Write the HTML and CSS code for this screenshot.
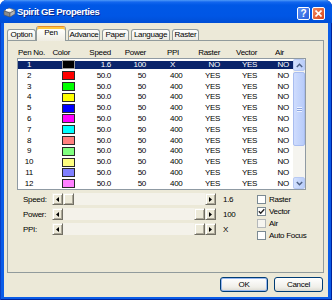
FILE: index.html
```html
<!DOCTYPE html>
<html lang="en">
<head>
    <meta charset="UTF-8">
    <title>Spirit GE Properties</title>
    <link rel="stylesheet" href="styles.css">
</head>
<body>

<div class="window">
    <div class="titlebar">
        <svg class="app-icon" width="13" height="12" viewBox="0 0 13 12">
            <polygon points="1,5 6,2 12,4 7,7" fill="#e2e2e2" stroke="#6a6a6a" stroke-width="0.6"/>
            <polygon points="1,5 7,7 7,11 1,9" fill="#8c8c8c" stroke="#555" stroke-width="0.6"/>
            <polygon points="7,7 12,4 12,8 7,11" fill="#b4b4b4" stroke="#555" stroke-width="0.6"/>
            <rect x="3" y="3" width="5" height="2" fill="#fff"/>
        </svg>
        <span class="title">Spirit GE Properties</span>
        <div class="caption-btns">
            <span class="cap-btn help">?</span>
            <span class="cap-btn close">
                <svg width="7" height="7" viewBox="0 0 7 7"><path d="M0.5 0.5L6.5 6.5M6.5 0.5L0.5 6.5" stroke="#fff" stroke-width="1.6"/></svg>
            </span>
        </div>
    </div>

    <div class="client">
        <div class="tabs">
            <div class="tab tab-option">Option</div>
            <div class="tab tab-pen active">Pen</div>
            <div class="tab tab-advance">Advance</div>
            <div class="tab tab-paper">Paper</div>
            <div class="tab tab-language">Language</div>
            <div class="tab tab-raster">Raster</div>
        </div>

        <div class="panel">
            <div class="cols head">
                <span class="c-no">Pen No.</span>
                <span class="c-color">Color</span>
                <span class="c-speed">Speed</span>
                <span class="c-power">Power</span>
                <span class="c-ppi">PPI</span>
                <span class="c-raster">Raster</span>
                <span class="c-vector">Vector</span>
                <span class="c-air">Air</span>
            </div>

            <div class="listbox">
                <div class="rows">
                    <div class="cols row selected">
                        <span class="c-no">1</span><span class="c-color"><i class="swatch pen1"></i></span>
                        <span class="c-speed">1.6</span><span class="c-power">100</span><span class="c-ppi">X</span>
                        <span class="c-raster">NO</span><span class="c-vector">YES</span><span class="c-air">NO</span>
                    </div>
                    <div class="cols row">
                        <span class="c-no">2</span><span class="c-color"><i class="swatch pen2"></i></span>
                        <span class="c-speed">50.0</span><span class="c-power">50</span><span class="c-ppi">400</span>
                        <span class="c-raster">YES</span><span class="c-vector">YES</span><span class="c-air">NO</span>
                    </div>
                    <div class="cols row">
                        <span class="c-no">3</span><span class="c-color"><i class="swatch pen3"></i></span>
                        <span class="c-speed">50.0</span><span class="c-power">50</span><span class="c-ppi">400</span>
                        <span class="c-raster">YES</span><span class="c-vector">YES</span><span class="c-air">NO</span>
                    </div>
                    <div class="cols row">
                        <span class="c-no">4</span><span class="c-color"><i class="swatch pen4"></i></span>
                        <span class="c-speed">50.0</span><span class="c-power">50</span><span class="c-ppi">400</span>
                        <span class="c-raster">YES</span><span class="c-vector">YES</span><span class="c-air">NO</span>
                    </div>
                    <div class="cols row">
                        <span class="c-no">5</span><span class="c-color"><i class="swatch pen5"></i></span>
                        <span class="c-speed">50.0</span><span class="c-power">50</span><span class="c-ppi">400</span>
                        <span class="c-raster">YES</span><span class="c-vector">YES</span><span class="c-air">NO</span>
                    </div>
                    <div class="cols row">
                        <span class="c-no">6</span><span class="c-color"><i class="swatch pen6"></i></span>
                        <span class="c-speed">50.0</span><span class="c-power">50</span><span class="c-ppi">400</span>
                        <span class="c-raster">YES</span><span class="c-vector">YES</span><span class="c-air">NO</span>
                    </div>
                    <div class="cols row">
                        <span class="c-no">7</span><span class="c-color"><i class="swatch pen7"></i></span>
                        <span class="c-speed">50.0</span><span class="c-power">50</span><span class="c-ppi">400</span>
                        <span class="c-raster">YES</span><span class="c-vector">YES</span><span class="c-air">NO</span>
                    </div>
                    <div class="cols row">
                        <span class="c-no">8</span><span class="c-color"><i class="swatch pen8"></i></span>
                        <span class="c-speed">50.0</span><span class="c-power">50</span><span class="c-ppi">400</span>
                        <span class="c-raster">YES</span><span class="c-vector">YES</span><span class="c-air">NO</span>
                    </div>
                    <div class="cols row">
                        <span class="c-no">9</span><span class="c-color"><i class="swatch pen9"></i></span>
                        <span class="c-speed">50.0</span><span class="c-power">50</span><span class="c-ppi">400</span>
                        <span class="c-raster">YES</span><span class="c-vector">YES</span><span class="c-air">NO</span>
                    </div>
                    <div class="cols row">
                        <span class="c-no">10</span><span class="c-color"><i class="swatch pen10"></i></span>
                        <span class="c-speed">50.0</span><span class="c-power">50</span><span class="c-ppi">400</span>
                        <span class="c-raster">YES</span><span class="c-vector">YES</span><span class="c-air">NO</span>
                    </div>
                    <div class="cols row">
                        <span class="c-no">11</span><span class="c-color"><i class="swatch pen11"></i></span>
                        <span class="c-speed">50.0</span><span class="c-power">50</span><span class="c-ppi">400</span>
                        <span class="c-raster">YES</span><span class="c-vector">YES</span><span class="c-air">NO</span>
                    </div>
                    <div class="cols row">
                        <span class="c-no">12</span><span class="c-color"><i class="swatch pen12"></i></span>
                        <span class="c-speed">50.0</span><span class="c-power">50</span><span class="c-ppi">400</span>
                        <span class="c-raster">YES</span><span class="c-vector">YES</span><span class="c-air">NO</span>
                    </div>
                </div>

                <div class="vscroll">
                    <span class="vbtn">
                        <svg width="7" height="5" viewBox="0 0 7 5"><path d="M0.8 4L3.5 1.3L6.2 4" fill="none" stroke="#4d6185" stroke-width="1.5"/></svg>
                    </span>
                    <span class="vthumb"><i class="grip"></i></span>
                    <span class="vtrack"></span>
                    <span class="vbtn">
                        <svg width="7" height="5" viewBox="0 0 7 5"><path d="M0.8 1L3.5 3.7L6.2 1" fill="none" stroke="#4d6185" stroke-width="1.5"/></svg>
                    </span>
                </div>
            </div>

            <div class="controls">
                <div class="sliders">
                    <div class="slider-row">
                        <span class="slider-label">Speed:</span>
                        <div class="hscroll">
                            <span class="sbtn"><svg width="3" height="5" viewBox="0 0 3 5"><path d="M3 0V5L0 2.5Z"/></svg></span>
                            <div class="track"><span class="thumb"></span></div>
                            <span class="sbtn"><svg width="3" height="5" viewBox="0 0 3 5"><path d="M0 0V5L3 2.5Z"/></svg></span>
                        </div>
                        <span class="slider-val">1.6</span>
                    </div>
                    <div class="slider-row">
                        <span class="slider-label">Power:</span>
                        <div class="hscroll">
                            <span class="sbtn"><svg width="3" height="5" viewBox="0 0 3 5"><path d="M3 0V5L0 2.5Z"/></svg></span>
                            <div class="track at-end"><span class="thumb"></span></div>
                            <span class="sbtn"><svg width="3" height="5" viewBox="0 0 3 5"><path d="M0 0V5L3 2.5Z"/></svg></span>
                        </div>
                        <span class="slider-val">100</span>
                    </div>
                    <div class="slider-row">
                        <span class="slider-label">PPI:</span>
                        <div class="hscroll">
                            <span class="sbtn"><svg width="3" height="5" viewBox="0 0 3 5"><path d="M3 0V5L0 2.5Z"/></svg></span>
                            <div class="track at-end"><span class="thumb"></span></div>
                            <span class="sbtn"><svg width="3" height="5" viewBox="0 0 3 5"><path d="M0 0V5L3 2.5Z"/></svg></span>
                        </div>
                        <span class="slider-val">X</span>
                    </div>
                </div>

                <div class="checks">
                    <div class="check-row"><span class="box"></span>Raster</div>
                    <div class="check-row">
                        <span class="box">
                            <svg width="7" height="7" viewBox="0 0 7 7"><path d="M0.8 3.2L2.7 5.2L6.3 1.3" fill="none" stroke="#222" stroke-width="1.4"/></svg>
                        </span>Vector
                    </div>
                    <div class="check-row"><span class="box disabled"></span>Air</div>
                    <div class="check-row"><span class="box"></span>Auto Focus</div>
                </div>
            </div>
        </div>

        <div class="buttons">
            <button class="btn default">OK</button>
            <button class="btn">Cancel</button>
        </div>
    </div>
</div>

</body>
</html>
```

FILE: styles.css
```css
* {
    box-sizing: border-box;
}

body {
    margin: 0;
    font-family: "Liberation Sans", Arial, sans-serif;
    font-size: 8px;
    letter-spacing: -0.3px;
    color: #000;
    background: #fff;
}

/* window frame */

.window {
    width: 332px;
    height: 300px;
    display: flex;
    flex-direction: column;
    background: #0a5ce8;
    border-radius: 7px 7px 0 0;
    box-shadow: inset 1px 0 #0a3fc4, inset -1px 0 #00239a, inset 0 -1px #00239a;
}

.titlebar {
    height: 23px;
    flex-shrink: 0;
    display: flex;
    align-items: center;
    padding: 0 7px 0 3px;
    border-radius: 7px 7px 0 0;
    background: linear-gradient(to bottom, #4f9af8 0, #1467ef 2px, #0058e6 5px, #0056e5 16px, #004ed5 23px);
}

.app-icon {
    margin-right: 1px;
}

.title {
    color: #fff;
    font-weight: bold;
    font-size: 9.5px;
    letter-spacing: -0.4px;
    text-shadow: 1px 1px #0c2a8a;
}

.caption-btns {
    margin-left: auto;
    align-self: flex-end;
    margin-bottom: 3px;
    display: flex;
    gap: 2px;
}

.cap-btn {
    width: 13px;
    height: 13px;
    border: 1px solid #fff;
    border-radius: 2px;
    display: flex;
    align-items: center;
    justify-content: center;
    color: #fff;
    font-weight: bold;
    font-size: 10px;
    letter-spacing: 0;
}

.help {
    background: linear-gradient(135deg, #5a8ef5, #2a5fdc);
}

.close {
    background: linear-gradient(135deg, #f0895e, #d9441c);
}

/* dialog body */

.client {
    flex: 1;
    margin: 0 4px 3px 4px;
    padding: 3px 4px 0 3px;
    background: #ece9d8;
    display: flex;
    flex-direction: column;
}

.tabs {
    height: 14px;
    display: flex;
    align-items: flex-end;
}

.tab {
    height: 11px;
    margin-right: 2px;
    line-height: 10px;
    text-align: center;
    border: 1px solid #919b9c;
    border-bottom: none;
    border-radius: 3px 3px 0 0;
    background: linear-gradient(to bottom, #fff, #eceae2);
}

.tab-option { width: 29px; }
.tab-pen { width: 30px; }
.tab-advance { width: 32px; }
.tab-paper { width: 27px; }
.tab-language { width: 39px; }
.tab-raster { width: 27px; }

.tab.active {
    height: 15px;
    margin-left: -2px;
    margin-bottom: -1px;
    position: relative;
    z-index: 1;
    line-height: 11px;
    border-top: 1px solid #e68b2c;
    box-shadow: inset 0 2px #ffc73c;
    background: linear-gradient(to bottom, #fdfdfb 3px, #efede2);
}

.panel {
    height: 233px;
    border: 1px solid #919b9c;
    background: #ece9d8;
}

/* pen list */

.cols {
    display: grid;
    grid-template-columns: 22px 35px 36px 35px 44px 30px 37px 32px;
    white-space: nowrap;
}

.c-no { text-align: center; }
.c-color { text-align: right; }
.c-speed, .c-power, .c-raster, .c-vector, .c-air { text-align: right; }
.c-ppi { padding-left: 24px; }

.head {
    height: 9px;
    line-height: 9px;
    margin: 7px 0 1px 10px;
}

.head .c-no { text-align: left; }
.head .c-color { padding-right: 5px; }
.head .c-ppi { padding-left: 21px; }
.head .c-air { padding-right: 5px; }

.listbox {
    width: 289px;
    height: 132px;
    margin-left: 9px;
    border: 1px solid #8f9aa3;
    background: #fff;
    display: flex;
}

.rows {
    flex: 1;
    padding-top: 1px;
    overflow: hidden;
}

.row {
    height: 10.8px;
    line-height: 10.8px;
}

.row.selected {
    color: #fff;
    background: linear-gradient(to bottom, transparent 1.5px, #0a246a 1.5px, #0a246a 9.5px, transparent 9.5px);
}

.swatch {
    display: inline-block;
    width: 13px;
    height: 9px;
    vertical-align: middle;
    border: 1px solid #2a2a2a;
}

.selected .swatch {
    border-color: #9a9a9a;
}

.pen1 { background: #000; }
.pen2 { background: #ff0000; }
.pen3 { background: #00ff00; }
.pen4 { background: #ffff00; }
.pen5 { background: #0000ff; }
.pen6 { background: #ff00ff; }
.pen7 { background: #00ffff; }
.pen8 { background: #ff8080; }
.pen9 { background: #80ff80; }
.pen10 { background: #ffff80; }
.pen11 { background: #8080ff; }
.pen12 { background: #ff80ff; }

.vscroll {
    width: 12px;
    display: flex;
    flex-direction: column;
    background: #f5f4ef;
}

.vbtn {
    height: 12px;
    display: flex;
    align-items: center;
    justify-content: center;
    border: 1px solid #b7c9f3;
    border-radius: 2px;
    background: linear-gradient(to right, #d4e1fd, #b9cdfa);
}

.vthumb {
    height: 74px;
    margin-top: 1px;
    display: flex;
    align-items: center;
    justify-content: center;
    border: 1px solid #a9bdf0;
    border-radius: 2px;
    background: linear-gradient(to right, #cfdcfd, #b8ccfa);
}

.grip {
    width: 5px;
    height: 5px;
    background: repeating-linear-gradient(to bottom, #eef3ff 0, #eef3ff 1px, #8ea6e0 1px, #8ea6e0 2px);
}

.vtrack {
    flex: 1;
}

/* sliders and options */

.controls {
    display: flex;
    margin-top: 3px;
}

.sliders {
    padding-left: 15px;
}

.slider-row {
    height: 12px;
    margin-bottom: 3px;
    display: flex;
    align-items: center;
}

.slider-label {
    width: 29px;
}

.hscroll {
    width: 164px;
    height: 12px;
    display: flex;
}

.sbtn, .thumb {
    width: 11px;
    height: 12px;
    background: #ece9d8;
    border: 1px solid;
    border-color: #f1efe2 #716f64 #716f64 #f1efe2;
    box-shadow: inset 1px 1px #fff, inset -1px -1px #aca899;
}

.sbtn {
    display: flex;
    align-items: center;
    justify-content: center;
}

.track {
    flex: 1;
    display: flex;
    background: #f4f2ea;
}

.track.at-end {
    justify-content: flex-end;
}

.slider-val {
    width: 34px;
    margin-left: 7px;
}

.check-row {
    height: 12px;
    display: flex;
    align-items: center;
}

.box {
    width: 9px;
    height: 9px;
    margin-right: 3px;
    border: 1px solid #7b8a93;
    background: #fff;
    display: flex;
    align-items: center;
    justify-content: center;
}

.box.disabled {
    border-color: #b4b8ba;
    background: #f6f5f0;
}

/* dialog buttons */

.buttons {
    display: flex;
    justify-content: flex-end;
    gap: 6px;
    margin: 4px 1px 0 0;
}

.btn {
    height: 15px;
    width: 48px;
    padding: 0;
    font-family: inherit;
    font-size: 8px;
    letter-spacing: -0.3px;
    border: 1px solid #003c74;
    border-radius: 3px;
    background: linear-gradient(to bottom, #fff, #f0efe9 70%, #dcdad0);
}

.btn + .btn {
    width: 49px;
}

.btn.default {
    box-shadow: inset 0 0 0 1px #98b8f0;
}
```
